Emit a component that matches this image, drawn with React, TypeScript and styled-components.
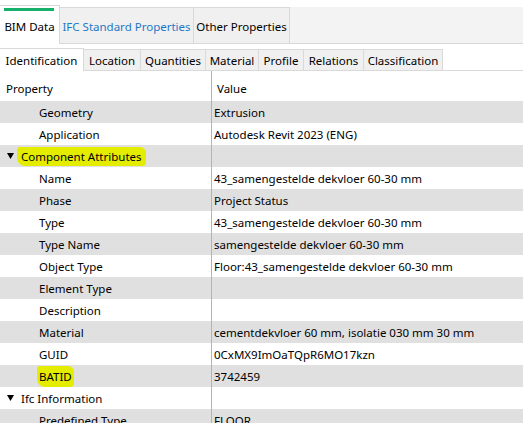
import React from "react";
import styled, { createGlobalStyle } from "styled-components";

const Global = createGlobalStyle`
  html, body { margin: 0; padding: 0; background: #ffffff; }
  body { font-family: "Noto Sans", "Open Sans", sans-serif; font-size: 11px; color: #000; }
`;

const Root = styled.div`
  width: 523px;
  height: 423px;
  overflow: hidden;
  background: #fff;
  padding-top: 7px;
  box-sizing: border-box;
`;

const TopBar = styled.div`
  display: flex;
  align-items: flex-end;
  height: 36px;
  background: #f3f3f3;
  border-bottom: 1px solid #d9d9d9;
`;

const TopTab = styled.div<{ $active?: boolean; $blue?: boolean; $w: number }>`
  position: relative;
  box-sizing: border-box;
  width: ${(p) => p.$w}px;
  height: ${(p) => (p.$active ? 39 : 36)}px;
  margin-bottom: ${(p) => (p.$active ? -1 : 0)}px;
  background: ${(p) => (p.$active ? "#ffffff" : "#f0f0f0")};
  border-top: 1px solid #d9d9d9;
  border-right: 1px solid #d9d9d9;
  display: flex;
  align-items: center;
  justify-content: center;
  padding-top: ${(p) => (p.$active ? 3 : 2)}px;
  font-size: 11.5px;
  color: ${(p) => (p.$blue ? "#1e78c8" : "#000")};
  white-space: nowrap;
`;

const GreenBar = styled.div`
  position: absolute;
  top: 2px;
  left: 4px;
  width: 50px;
  height: 3px;
  background: #15b06a;
`;

const SubBar = styled.div`
  display: flex;
  align-items: flex-end;
  height: 22px;
  margin-top: 4px;
  border-bottom: 1px solid #d9d9d9;
`;

const SubTab = styled.div<{ $active?: boolean; $w: number }>`
  box-sizing: border-box;
  width: ${(p) => p.$w}px;
  height: ${(p) => (p.$active ? 23 : 21)}px;
  margin-bottom: ${(p) => (p.$active ? -1 : 0)}px;
  background: ${(p) => (p.$active ? "#ffffff" : "#f0f0f0")};
  border: 1px solid #d9d9d9;
  border-bottom: none;
  border-left: ${(p) => (p.$active ? "none" : "1px solid #d9d9d9")};
  margin-left: ${(p) => (p.$active ? 0 : -1)}px;
  display: flex;
  align-items: center;
  justify-content: center;
  padding-top: ${(p) => (p.$active ? 0 : 1)}px;
  font-size: 11.5px;
  white-space: nowrap;
`;

const Grid = styled.div`
  display: grid;
  grid-template-columns: 211px 1fr;
`;

const Cell = styled.div<{ $gray?: boolean; $value?: boolean; $header?: boolean; $indent?: number }>`
  height: ${(p) => (p.$header ? 30 : 22)}px;
  background: ${(p) => (p.$gray ? "#e0e0e0" : "#ffffff")};
  display: flex;
  align-items: center;
  padding-left: ${(p) => (p.$value ? 2 : p.$indent ?? 6)}px;
  border-left: ${(p) => (p.$value ? "1px solid #b4b4b4" : "none")};
  padding-top: ${(p) => (p.$header ? 4 : 0)}px;
  box-sizing: border-box;
  font-size: 11.5px;
  white-space: nowrap;
  ${(p) => (p.$value && p.$header ? "padding-left: 5px;" : "")}
`;

const Caret = styled.svg`
  width: 7px;
  height: 6px;
  margin-right: 7px;
  flex: none;
`;

const Mark = styled.span<{ $pad: number; $v: number }>`
  background: #e4ec00;
  border-radius: 3px 6px 4px 8px;
  padding: ${(p) => p.$v}px ${(p) => p.$pad}px ${(p) => p.$v}px ${(p) => p.$pad}px;
  margin-left: ${(p) => -p.$pad}px;
`;

type Row =
  | { kind: "group"; label: string; mark?: boolean }
  | { kind: "prop"; label: string; value: string; mark?: boolean };

const rows: Row[] = [
  { kind: "prop", label: "Geometry", value: "Extrusion" },
  { kind: "prop", label: "Application", value: "Autodesk Revit 2023 (ENG)" },
  { kind: "group", label: "Component Attributes", mark: true },
  { kind: "prop", label: "Name", value: "43_samengestelde dekvloer 60-30 mm" },
  { kind: "prop", label: "Phase", value: "Project Status" },
  { kind: "prop", label: "Type", value: "43_samengestelde dekvloer 60-30 mm" },
  { kind: "prop", label: "Type Name", value: "samengestelde dekvloer 60-30 mm" },
  { kind: "prop", label: "Object Type", value: "Floor:43_samengestelde dekvloer 60-30 mm" },
  { kind: "prop", label: "Element Type", value: "" },
  { kind: "prop", label: "Description", value: "" },
  { kind: "prop", label: "Material", value: "cementdekvloer 60 mm, isolatie 030 mm 30 mm" },
  { kind: "prop", label: "GUID", value: "0CxMX9ImOaTQpR6MO17kzn" },
  { kind: "prop", label: "BATID", value: "3742459", mark: true },
  { kind: "group", label: "Ifc Information" },
  { kind: "prop", label: "Predefined Type", value: "FLOOR" },
];

const topTabs = [
  { label: "BIM Data", w: 60, active: true },
  { label: "IFC Standard Properties", w: 134, blue: true },
  { label: "Other Properties", w: 96 },
];

const subTabs = [
  { label: "Identification", w: 84, active: true },
  { label: "Location", w: 58 },
  { label: "Quantities", w: 66 },
  { label: "Material", w: 54 },
  { label: "Profile", w: 46 },
  { label: "Relations", w: 61 },
  { label: "Classification", w: 80 },
];

export default function App() {
  return (
    <>
      <Global />
      <Root>
        <TopBar>
          {topTabs.map((t) => (
            <TopTab key={t.label} $active={t.active} $blue={t.blue} $w={t.w}>
              {t.active && <GreenBar />}
              {t.label}
            </TopTab>
          ))}
        </TopBar>
        <SubBar>
          {subTabs.map((t) => (
            <SubTab key={t.label} $active={t.active} $w={t.w}>
              {t.label}
            </SubTab>
          ))}
        </SubBar>
        <Grid>
          <Cell $header>Property</Cell>
          <Cell $header $value>
            Value
          </Cell>
          {rows.map((r, i) => {
            const gray = i % 2 === 0;
            if (r.kind === "group") {
              return (
                <React.Fragment key={r.label}>
                  <Cell $gray={gray} $indent={7}>
                    <Caret viewBox="0 0 7 6">
                      <polygon points="0,0 7,0 3.5,6" fill="#000" />
                    </Caret>
                    {r.mark ? (
                      <Mark $pad={4} $v={2}>
                        {r.label}
                      </Mark>
                    ) : (
                      r.label
                    )}
                  </Cell>
                  <Cell $gray={gray} $value />
                </React.Fragment>
              );
            }
            return (
              <React.Fragment key={r.label}>
                <Cell $gray={gray} $indent={39}>
                  {r.mark ? (
                    <Mark $pad={2} $v={3}>
                      {r.label}
                    </Mark>
                  ) : (
                    r.label
                  )}
                </Cell>
                <Cell $gray={gray} $value>
                  {r.value}
                </Cell>
              </React.Fragment>
            );
          })}
        </Grid>
      </Root>
    </>
  );
}
